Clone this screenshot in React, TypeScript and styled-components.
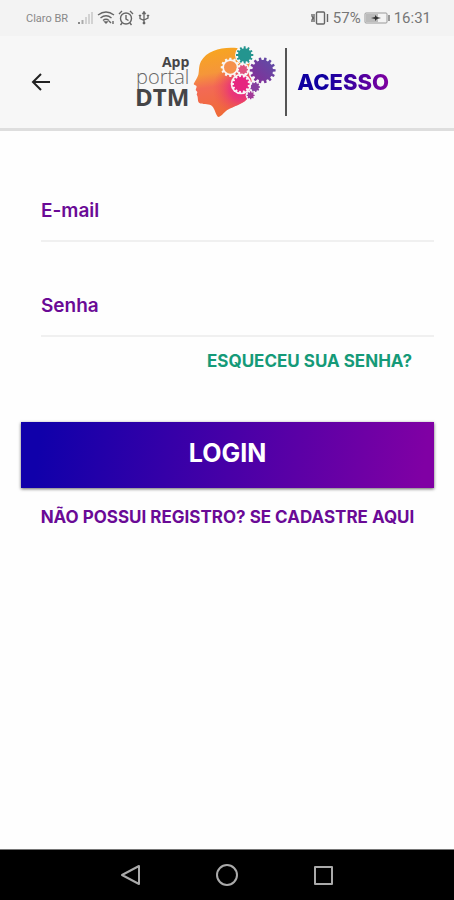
import React from "react";
import styled, { createGlobalStyle } from "styled-components";

const GlobalStyle = createGlobalStyle`
  * { box-sizing: border-box; }
  body { margin: 0; background: #fefefe; font-family: Inter, "Open Sans", sans-serif; }
`;

const Screen = styled.div`
  min-height: 100vh;
  display: flex;
  flex-direction: column;
`;

const StatusBar = styled.div`
  height: 36px;
  padding: 0 23px 0 26px;
  display: flex;
  align-items: center;
  justify-content: space-between;
  background: #f3f3f3;
  color: #777;
  font-family: Roboto, sans-serif;
`;

const StatusGroup = styled.div`
  display: flex;
  align-items: center;
  gap: 3px;
`;

const Carrier = styled.span`
  font-size: 11px;
  margin-right: 6px;
  color: #888;
`;

const StatusText = styled.span`
  font-size: 15px;
`;

const Header = styled.header`
  height: 95px;
  display: flex;
  align-items: center;
  background: #f7f7f7;
  border-bottom: 3px solid #dedede;
`;

const BackButton = styled.button`
  width: 70px;
  height: 48px;
  padding: 0 0 0 12px;
  border: 0;
  background: none;
  display: grid;
  place-items: center;
`;

const Brand = styled.div`
  flex: 1;
  display: flex;
  align-items: center;
  justify-content: center;
`;

const BrandWords = styled.div`
  display: flex;
  flex-direction: column;
  align-items: flex-end;
  margin-right: 4px;
  font-family: "Open Sans", sans-serif;
  color: #454547;
`;

const AppWord = styled.span`
  font-size: 14px;
  line-height: 14px;
  font-weight: 700;
`;

const PortalWord = styled.span`
  font-size: 20px;
  line-height: 16px;
  font-weight: 300;
  color: #666;
`;

const DtmWord = styled.span`
  font-size: 24px;
  line-height: 24px;
  font-weight: 700;
`;

const Divider = styled.span`
  width: 2px;
  height: 68px;
  margin: 0 10px 0 8px;
  background: #555;
`;

const Title = styled.h1`
  margin: 0;
  font-size: 22px;
  line-height: 28px;
  font-weight: 800;
  color: transparent;
  background: linear-gradient(90deg, #1000a0 30%, #8000a0);
  background-clip: text;
  -webkit-background-clip: text;
`;

const Form = styled.form`
  flex: 1;
  display: flex;
  flex-direction: column;
  padding: 68px 20px 24px 21px;
`;

const Field = styled.div`
  display: flex;
  flex-direction: column;
  margin: 0 0 52px 20px;

  & + & { margin-bottom: 12px; }
`;

const Label = styled.label`
  font-size: 19px;
  line-height: 24px;
  font-weight: 600;
  color: #6a0a96;
`;

const Input = styled.input`
  width: 100%;
  height: 19px;
  padding: 0;
  border: 0;
  border-bottom: 2px solid #f0f0f0;
  background: transparent;
  font: inherit;
  font-size: 14px;
  outline: none;
`;

const TextLink = styled.a<{ $tone: string }>`
  font-size: 17px;
  line-height: 24px;
  font-weight: 700;
  color: ${(p) => p.$tone};
  text-align: center;
  text-decoration: none;
`;

const ForgotRow = styled.div`
  display: flex;
  justify-content: flex-end;
  padding-right: 22px;
  margin-bottom: 49px;
`;

const LoginButton = styled.button`
  height: 66px;
  margin-bottom: 17px;
  padding: 0 0 4px;
  border: 0;
  color: #fff;
  font: inherit;
  font-size: 25px;
  font-weight: 700;
  background: linear-gradient(98deg, #1000aa 5%, #8000a4 97%);
  box-shadow: 0 1px 3px rgba(0, 0, 0, 0.6);
`;

const NavBar = styled.nav`
  height: 51px;
  display: flex;
  align-items: center;
  justify-content: center;
  gap: 72px;
  background: #000;
  border-top: 1px solid #777;
`;

const NavButton = styled.button`
  width: 24px;
  height: 24px;
  padding: 0;
  border: 0;
  background: none;
`;

function gear(cx: number, cy: number, outer: number, inner: number, teeth: number) {
  const points: string[] = [];
  const step = (Math.PI * 2) / teeth;
  for (let i = 0; i < teeth; i++) {
    [[-0.3, inner], [-0.2, outer], [0.2, outer], [0.3, inner]].forEach(([t, r]) => {
      const a = (i + t) * step;
      points.push(`${(cx + r * Math.cos(a)).toFixed(1)},${(cy + r * Math.sin(a)).toFixed(1)}`);
    });
  }
  return points.join(" ");
}

const HeadLogo = () => (
  <svg width="84" height="72" viewBox="12 18 252 216" aria-hidden="true">
    <defs>
      <linearGradient id="head" x1="0.35" y1="0" x2="0.5" y2="1">
        <stop offset="0" stopColor="#f7a61f" />
        <stop offset="0.35" stopColor="#f5963a" />
        <stop offset="0.55" stopColor="#f36a55" />
        <stop offset="1" stopColor="#ef6a35" />
      </linearGradient>
      <radialGradient id="pink" gradientUnits="userSpaceOnUse" cx="155" cy="148" r="85">
        <stop offset="0" stopColor="#e5218a" />
        <stop offset="0.4" stopColor="#e8307c" stopOpacity="0.8" />
        <stop offset="1" stopColor="#f05050" stopOpacity="0" />
      </radialGradient>
      <linearGradient id="violet" x1="0" y1="1" x2="1" y2="0">
        <stop offset="0" stopColor="#8a2b96" />
        <stop offset="1" stopColor="#5950a8" />
      </linearGradient>
      <path
        id="profile"
        d="M144 24 C100 20 55 30 36 64 C28 80 31 94 28 104 C25 114 17 124 14 132 C15 136 23 136 23 140 L20 150 L25 156 L23 164 C29 172 24 182 31 189 C40 195 57 190 66 196 C77 203 78 220 87 231 C98 229 104 217 116 209 C134 199 158 193 172 179 C184 166 192 150 188 130 L180 55 C171 38 160 28 144 24Z"
      />
    </defs>
    <use href="#profile" fill="url(#head)" />
    <use href="#profile" fill="url(#pink)" />
    <circle cx="167" cy="45" r="29" fill="#f7f7f7" />
    <circle cx="221" cy="91" r="43" fill="#f7f7f7" />
    <circle cx="198" cy="141" r="19" fill="#f7f7f7" />
    <circle cx="185" cy="166" r="15" fill="#f7f7f7" />
    <polygon points={gear(167, 45, 26, 20, 12)} fill="#24958f" />
    <polygon points={gear(221, 91, 39, 31, 14)} fill="url(#violet)" />
    <polygon points={gear(198, 141, 15, 12, 9)} fill="#86409f" />
    <polygon points={gear(185, 166, 12, 9, 8)} fill="#a33a98" />
    <polygon points={gear(124, 82, 29, 24, 12)} fill="#f9f4f2" />
    <circle cx="124" cy="82" r="19" fill="#f5904c" />
    <circle cx="162" cy="89" r="19" fill="#f7f7f7" />
    <polygon points={gear(162, 89, 15, 12, 9)} fill="#e0527e" />
    <circle cx="156" cy="132" r="31" fill="#f9f4f6" />
    <polygon points={gear(156, 132, 26, 21, 13)} fill="#e6267f" />
  </svg>
);

const SignalIcon = () => (
  <svg width="17" height="14" viewBox="0 0 17 14" aria-hidden="true">
    <path d="M1 11h2v2H1z" fill="#888" />
    <path d="M4.500 9h2v4h-2z" fill="#aaa" />
    <path d="M8 6h2v7H8zM11 3h2v10h-2zM14 1h2v12h-2z" fill="#d2d2d2" />
  </svg>
);

const WifiIcon = () => (
  <svg width="18" height="16" viewBox="0 0 18 16" fill="none" stroke="#666" strokeWidth="1.400" aria-hidden="true">
    <path d="M1 5Q9-1 17 5M3.500 8Q9 3.500 14.500 8M6 10.500Q9 8 12 10.500" />
    <path d="M8 12h2l-1 1zM12 11l2 2M16 11v3" />
  </svg>
);

const AlarmIcon = () => (
  <svg width="16" height="16" viewBox="0 0 16 16" fill="none" stroke="#666" strokeWidth="1.400" aria-hidden="true">
    <circle cx="8" cy="8.500" r="5.500" />
    <path d="M8 5v4l2.500 1.500M1 4l3-3M15 4l-3-3M4 13l-1.500 2M12 13l1.500 2" />
  </svg>
);

const UsbIcon = () => (
  <svg width="14" height="16" viewBox="0 0 14 16" fill="none" stroke="#666" strokeWidth="1.300" aria-hidden="true">
    <path d="M7 2v11M3 6v2.500l4 2M11 6v2l-4 2" />
    <path d="M5 4l2-3 2 3zM6 12h2v2H6zM2 5h2v1H2zM10 5h2v1h-2z" fill="#666" strokeWidth="0.500" />
  </svg>
);

const VibrateIcon = () => (
  <svg width="19" height="14" viewBox="0 0 19 14" fill="none" stroke="#666" strokeWidth="1.400" aria-hidden="true">
    <rect x="5.500" y="1" width="8" height="12" rx="1" />
    <path d="M3 3v8M16.500 3v8M1 3v2l1 2-1 2v2" />
  </svg>
);

const BatteryIcon = () => (
  <svg width="27" height="12" viewBox="0 0 27 12" aria-hidden="true">
    <rect x="1" y="1" width="22" height="10" rx="1" fill="none" stroke="#999" />
    <path d="M2 2h12v8H2z" fill="#bbb" />
    <path d="M24 3h2v6h-2z" fill="#999" />
    <path d="M7 6l4-1V3l2 2 4 1-4 1-2 2V7z" fill="#333" />
  </svg>
);

export default function App() {
  return (
    <Screen>
      <GlobalStyle />
      <StatusBar>
        <StatusGroup>
          <Carrier>Claro BR</Carrier>
          <SignalIcon />
          <WifiIcon />
          <AlarmIcon />
          <UsbIcon />
        </StatusGroup>
        <StatusGroup>
          <VibrateIcon />
          <StatusText>57%</StatusText>
          <BatteryIcon />
          <StatusText>16:31</StatusText>
        </StatusGroup>
      </StatusBar>
      <Header>
        <BackButton type="button" aria-label="Voltar">
          <svg width="20" height="20" viewBox="0 0 20 20" fill="none" stroke="#222" strokeWidth="2">
            <path d="M19 10H2M10 2l-8 8 8 8" />
          </svg>
        </BackButton>
        <Brand>
          <BrandWords>
            <AppWord>App</AppWord>
            <PortalWord>portal</PortalWord>
            <DtmWord>DTM</DtmWord>
          </BrandWords>
          <HeadLogo />
          <Divider />
          <Title>ACESSO</Title>
        </Brand>
      </Header>
      <Form onSubmit={(e) => e.preventDefault()}>
        <Field>
          <Label htmlFor="email">E-mail</Label>
          <Input id="email" type="email" />
        </Field>
        <Field>
          <Label htmlFor="senha">Senha</Label>
          <Input id="senha" type="password" />
        </Field>
        <ForgotRow>
          <TextLink href="#senha" $tone="#159a78">ESQUECEU SUA SENHA?</TextLink>
        </ForgotRow>
        <LoginButton type="submit">LOGIN</LoginButton>
        <TextLink href="#cadastro" $tone="#6a0a96">NÃO POSSUI REGISTRO? SE CADASTRE AQUI</TextLink>
      </Form>
      <NavBar>
        <NavButton type="button" aria-label="Voltar">
          <svg width="24" height="24" fill="none" stroke="#aaa" strokeWidth="2" strokeLinejoin="round">
            <path d="M20 3v18L3 12z" />
          </svg>
        </NavButton>
        <NavButton type="button" aria-label="Início">
          <svg width="24" height="24" fill="none" stroke="#aaa" strokeWidth="2">
            <circle cx="12" cy="12" r="10" />
          </svg>
        </NavButton>
        <NavButton type="button" aria-label="Recentes">
          <svg width="24" height="24" fill="none" stroke="#aaa" strokeWidth="2" strokeLinejoin="round">
            <path d="M4 4h17v17H4z" />
          </svg>
        </NavButton>
      </NavBar>
    </Screen>
  );
}
